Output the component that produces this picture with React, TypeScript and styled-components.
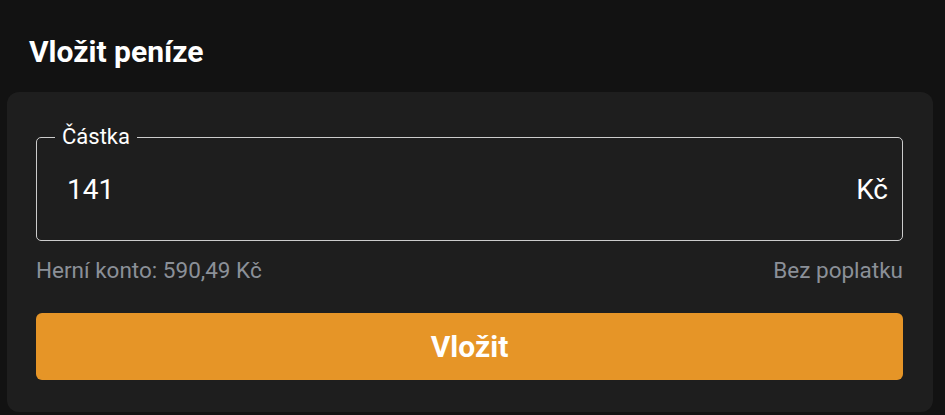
import React from "react";
import styled, { createGlobalStyle } from "styled-components";

const Global = createGlobalStyle`
  html, body { margin: 0; padding: 0; background: #121212; }
  body { font-family: Roboto, "Noto Sans", "Liberation Sans", sans-serif; color: #fff; }
  * { box-sizing: border-box; }
`;

const Page = styled.div`
  width: 945px;
  height: 415px;
  background: #121212;
  padding-top: 34px;
  overflow: hidden;
`;

const Title = styled.h1`
  margin: 0 0 22px 29px;
  font-size: 30px;
  line-height: 36px;
  font-weight: 700;
  color: #ffffff;
`;

const Card = styled.section`
  margin: 0 12px 0 7px;
  background: #1e1e1e;
  border-radius: 12px;
  padding: 45px 30px 32px 29px;
  display: flex;
  flex-direction: column;
`;

const Field = styled.div`
  position: relative;
  height: 104px;
  border: 1px solid #cccccc;
  border-radius: 5px;
  display: flex;
  align-items: center;
  padding: 0 14px 0 30px;
`;

const Label = styled.label`
  position: absolute;
  top: -14px;
  left: 18px;
  padding: 0 7px;
  background: #1e1e1e;
  font-size: 22px;
  line-height: 26px;
  color: #ffffff;
`;

const Input = styled.input`
  flex: 1;
  min-width: 0;
  background: transparent;
  border: none;
  outline: none;
  padding: 0;
  font-family: inherit;
  font-size: 28px;
  color: #ffffff;
`;

const Unit = styled.span`
  font-size: 28px;
  color: #ffffff;
`;

const Meta = styled.div`
  margin-top: 16px;
  display: flex;
  justify-content: space-between;
  font-size: 22.5px;
  line-height: 26px;
  color: #8b9098;
`;

const Button = styled.button`
  margin-top: 30px;
  height: 67px;
  border: none;
  border-radius: 6px;
  background: #e69527;
  color: #ffffff;
  font-family: inherit;
  font-size: 30px;
  font-weight: 700;
  cursor: pointer;
`;

export default function App() {
  return (
    <Page>
      <Global />
      <Title>Vložit peníze</Title>
      <Card>
        <Field>
          <Label htmlFor="amount">Částka</Label>
          <Input id="amount" defaultValue="141" />
          <Unit>Kč</Unit>
        </Field>
        <Meta>
          <span>Herní konto: 590,49 Kč</span>
          <span>Bez poplatku</span>
        </Meta>
        <Button>Vložit</Button>
      </Card>
    </Page>
  );
}
